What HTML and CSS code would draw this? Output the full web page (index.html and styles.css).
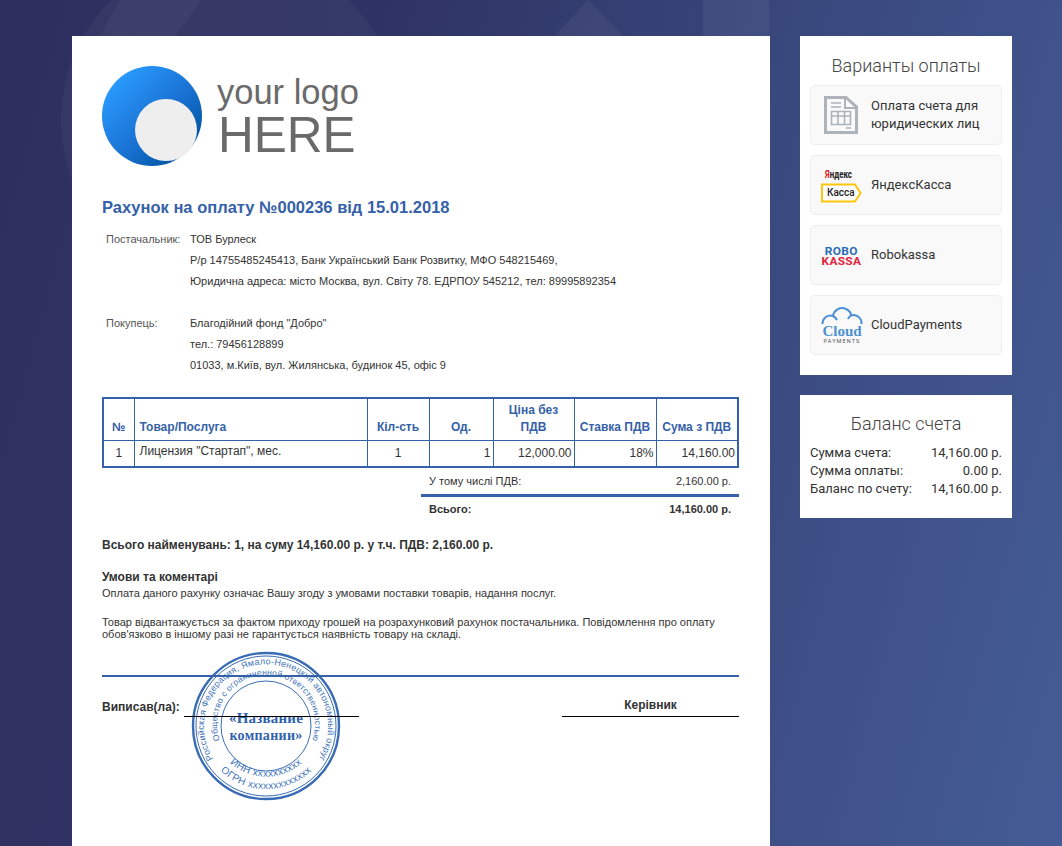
FILE: index.html
```html
<!DOCTYPE html>
<html lang="uk">
<head>
<meta charset="utf-8">
<title>Рахунок на оплату</title>
<link rel="stylesheet" href="styles.css">
</head>
<body>
<svg class="bg-shapes" width="1062" height="846" viewBox="0 0 1062 846" aria-hidden="true">
  <circle cx="230" cy="120" r="169" fill="#fff" fill-opacity="0.035"/>
  <polygon points="120,0 202,0 175,36 100,36" fill="#fff" fill-opacity="0.04"/>
  <polygon points="588,0 623,36 623,60 555,60 555,36" fill="#fff" fill-opacity="0.05"/>
  <rect x="703" y="0" width="66" height="40" fill="#fff" fill-opacity="0.05"/>
</svg>
<main class="page">
  <section class="invoice">
    <div class="logo">
      <svg class="logo-mark" width="100" height="100" viewBox="0 0 100 100" aria-hidden="true">
        <defs>
          <linearGradient id="lg" x1="0.15" y1="0.1" x2="0.9" y2="0.85">
            <stop offset="0" stop-color="#2a9bff"/>
            <stop offset="0.55" stop-color="#1a73d4"/>
            <stop offset="1" stop-color="#02539f"/>
          </linearGradient>
        </defs>
        <circle cx="50" cy="50" r="50" fill="url(#lg)"/>
        <circle cx="64" cy="64" r="31" fill="#eeeeee"/>
      </svg>
      <div class="logo-text">
        <div class="logo-your">your logo</div>
        <div class="logo-here">HERE</div>
      </div>
    </div>

    <h1 class="title">Рахунок на оплату №000236 від 15.01.2018</h1>

    <div class="party">
      <div class="party-label">Постачальник:</div>
      <div class="party-lines">
        <div>ТОВ Бурлеск</div>
        <div>Р/р 14755485245413, Банк Український Банк Розвитку, МФО 548215469,</div>
        <div>Юридична адреса: місто Москва, вул. Світу 78. ЕДРПОУ 545212, тел: 89995892354</div>
      </div>
    </div>
    <div class="party party-second">
      <div class="party-label">Покупець:</div>
      <div class="party-lines">
        <div>Благодійний фонд "Добро"</div>
        <div>тел.: 79456128899</div>
        <div>01033, м.Київ, вул. Жилянська, будинок 45, офіс 9</div>
      </div>
    </div>

    <table class="items">
      <colgroup>
        <col class="c1"><col class="c2"><col class="c3"><col class="c4"><col class="c5"><col class="c6"><col class="c7">
      </colgroup>
      <thead>
        <tr>
          <th>№</th>
          <th class="left">Товар/Послуга</th>
          <th>Кіл-сть</th>
          <th>Од.</th>
          <th>Ціна без<br>ПДВ</th>
          <th>Ставка ПДВ</th>
          <th>Сума з ПДВ</th>
        </tr>
      </thead>
      <tbody>
        <tr>
          <td class="center">1</td>
          <td class="name">Лицензия "Стартап", мес.</td>
          <td class="center">1</td>
          <td class="right">1</td>
          <td class="right">12,000.00</td>
          <td class="right">18%</td>
          <td class="right">14,160.00</td>
        </tr>
      </tbody>
    </table>

    <div class="totals">
      <div class="totals-row"><span>У тому числі ПДВ:</span><span>2,160.00 р.</span></div>
      <div class="totals-row totals-bold"><span>Всього:</span><span>14,160.00 р.</span></div>
    </div>

    <p class="grand">Всього найменувань: 1, на суму 14,160.00 р. у т.ч. ПДВ: 2,160.00 р.</p>

    <h2 class="terms-title">Умови та коментарі</h2>
    <p class="terms">Оплата даного рахунку означає Вашу згоду з умовами поставки товарів, надання послуг.</p>
    <p class="terms terms-second">Товар відвантажується за фактом приходу грошей на розрахунковий рахунок постачальника. Повідомлення про оплату обов'язково в іншому разі не гарантується наявність товару на складі.</p>

    <svg class="stamp" width="152" height="152" viewBox="0 0 152 152">
      <defs>
        <path id="ringA" d="M 24 110 A 62 62 0 1 1 128 110"/>
        <path id="ringB" d="M 30 91 A 49 49 0 1 1 122 91"/>
        <path id="ringC" d="M 20 108 A 66 66 0 0 0 132 108"/>
        <path id="ringD" d="M 30 101 A 54 54 0 0 0 122 101"/>
      </defs>
      <circle class="ring-thick" cx="76" cy="76" r="73"/>
      <circle class="ring-thin" cx="76" cy="76" r="70"/>
      <circle class="ring-thin" cx="76" cy="76" r="45"/>
      <text class="stamp-ring" text-anchor="middle"><textPath href="#ringA" startOffset="50%">Российская Федерация, Ямало-Ненецкий автономный округ</textPath></text>
      <text class="stamp-ring stamp-ring-in" text-anchor="middle"><textPath href="#ringB" startOffset="50%">Общество с ограниченной ответственностью</textPath></text>
      <text class="stamp-ring stamp-ring-low" text-anchor="middle"><textPath href="#ringC" startOffset="50%">ОГРН xxxxxxxxxxxxx</textPath></text>
      <text class="stamp-ring stamp-ring-low" text-anchor="middle"><textPath href="#ringD" startOffset="50%">ИНН xxxxxxxxxx</textPath></text>
      <text class="stamp-name" x="76" y="73" text-anchor="middle">«Название</text>
      <text class="stamp-name stamp-name-2" x="76" y="90" text-anchor="middle">компании»</text>
    </svg>

    <div class="sign">
      <div class="sign-left">
        <span class="sign-label">Виписав(ла):</span>
        <span class="sign-line"></span>
      </div>
      <div class="sign-right">Керівник</div>
    </div>
  </section>

  <aside class="side">
    <section class="card">
      <h3 class="card-title">Варианты оплаты</h3>
      <div class="pay-list">
        <div class="pay">
          <div class="pay-icon">
            <svg width="34" height="38" viewBox="0 0 34 38" aria-hidden="true">
              <path d="M1.5 1.5H22L32.5 11V36.5H1.5Z" fill="none" stroke="#adb3ba" stroke-width="3"/>
              <path d="M21 2V12H32" fill="none" stroke="#adb3ba" stroke-width="2"/>
              <path d="M7 7H17M7 11H17M22 32H27" stroke="#adb3ba" stroke-width="1.6"/>
              <path d="M7.5 15.5H26.5V28.5H7.5ZM7.5 20H26.5M14 15.5V28.5M20.5 15.5V28.5" fill="none" stroke="#adb3ba" stroke-width="1.6"/>
            </svg>
          </div>
          <div class="pay-name">Оплата счета для<br>юридических лиц</div>
        </div>
        <div class="pay">
          <div class="pay-icon yandex">
            <div class="ya-top"><span class="ya-red">Я</span>ндекс</div>
            <div class="ya-box">
              <svg class="ya-shape" width="41" height="20" viewBox="0 0 41 20" aria-hidden="true">
                <path d="M1 1.5H34L39.5 10L34 18.5H1Z" fill="#fff" stroke="#fdc60a" stroke-width="2"/>
              </svg>
              <span class="ya-label">Касса</span>
            </div>
          </div>
          <div class="pay-name">ЯндексКасса</div>
        </div>
        <div class="pay">
          <div class="pay-icon robo">
            <div class="robo-a">ROBO</div>
            <div class="robo-b">KASSA</div>
          </div>
          <div class="pay-name">Robokassa</div>
        </div>
        <div class="pay">
          <div class="pay-icon cloud">
            <svg class="cloud-shape" width="42" height="20" viewBox="0 0 42 20" aria-hidden="true">
              <path d="M1.500 18C1.500 12 7 8 12 10C13 4 19 1 24 2.500C28 4 30 7 30 9.500C35 7.500 41 12 40.500 18M12 10C14 11 15 12 16 14M30 9.500C28.500 10.500 27.500 11.500 27 13" fill="none" stroke="#4a90d2" stroke-width="2"/>
            </svg>
            <div class="cloud-word">Cloud</div>
            <div class="cloud-sub">PAYMENTS</div>
          </div>
          <div class="pay-name">CloudPayments</div>
        </div>
      </div>
    </section>
    <section class="card card-balance">
      <h3 class="card-title">Баланс счета</h3>
      <div class="bal-row"><span>Сумма счета:</span><span>14,160.00 р.</span></div>
      <div class="bal-row"><span>Сумма оплаты:</span><span>0.00 р.</span></div>
      <div class="bal-row"><span>Баланс по счету:</span><span>14,160.00 р.</span></div>
    </section>
  </aside>
</main>
</body>
</html>
```

FILE: styles.css
```css
* { box-sizing: border-box; }
html, body { margin: 0; padding: 0; height: 846px; overflow: hidden; }
body {
  background: linear-gradient(105deg, #2e2f5e 0%, #2f3363 30%, #3a4a80 66%, #3f5189 80%, #445c95 100%);
  font-family: "Liberation Sans", Arial, sans-serif;
  color: #333;
  position: relative;
}
.bg-shapes { position: absolute; left: 0; top: 0; }
.page {
  position: relative;
  display: flex;
  gap: 30px;
  align-items: flex-start;
  padding: 36px 0 0 72px;
}

/* invoice */
.invoice {
  position: relative;
  width: 698px;
  height: 810px;
  background: #fff;
  padding: 30px 31px 0 30px;
  overflow: hidden;
}
.logo { display: flex; align-items: flex-start; gap: 15px; height: 100px; }
.logo-mark { display: block; }
.logo-text { color: #6a6a6a; padding-top: 6px; }
.logo-your { font-size: 34.500px; line-height: 40px; }
.logo-here { font-size: 49.500px; line-height: 46px; margin-left: 1px; }

.title {
  margin: 32px 0 0;
  font-size: 16.500px;
  line-height: 18px;
  font-weight: bold;
  color: #3561a8;
}
.party {
  display: flex;
  margin-top: 13px;
  font-size: 11px;
  line-height: 21px;
}
.party-second { margin-top: 21px; }
.party-label { width: 88px; padding-left: 4px; color: #555; }
.party-lines { color: #333; }

.items {
  margin-top: 21px;
  width: 635px;
  table-layout: fixed;
  border-collapse: collapse;
  border: 2px solid #3561a8;
  font-size: 12px;
}
.c1 { width: 31px; } .c2 { width: 233px; } .c3 { width: 62px; } .c4 { width: 64px; }
.c5 { width: 81px; } .c6 { width: 82px; } .c7 { width: 82px; }
.items th, .items td { border: 1px solid #3561a8; }
.items th {
  height: 42px;
  padding: 0 2px 4px;
  color: #3561a8;
  font-weight: bold;
  font-size: 12px;
  line-height: 17px;
  text-align: center;
  vertical-align: bottom;
}
.items th.left { text-align: left; padding-left: 5px; }
.items td { height: 27px; padding: 0 2px; color: #333; vertical-align: middle; }
.items td.name { padding: 0 0 4px 5px; }
.center { text-align: center; }
.right { text-align: right; }

.totals { margin-left: 319px; width: 318px; font-size: 11px; }
.totals-row { display: flex; justify-content: space-between; padding: 0 8px; height: 24px; align-items: center; }
.totals-row:first-child { border-bottom: 3px solid #3561a8; height: 29px; padding-top: 0; }
.totals-bold { font-weight: bold; }

.grand { margin: 16px 0 0; font-size: 12px; line-height: 16px; font-weight: bold; color: #333; }
.terms-title { margin: 16px 0 0; font-size: 12px; line-height: 16px; font-weight: bold; color: #333; }
.terms { margin: 2px 0 0; font-size: 11px; line-height: 12px; color: #333; width: 636px; }
.terms-second { margin-top: 17px; }

.stamp { position: absolute; left: 118px; top: 614px; }
.stamp circle { fill: none; stroke: #3a6cb5; }
.ring-thick { stroke-width: 2.400; }
.ring-thin { stroke-width: 1; }
.stamp-ring { font-family: "Liberation Sans", Arial, sans-serif; font-size: 9px; fill: #4475bb; letter-spacing: 0.200px; }
.stamp-ring-in { font-size: 8.500px; letter-spacing: 0.200px; }
.stamp-ring-low { font-size: 10px; letter-spacing: 0.300px; }
.stamp-name { font-family: "Liberation Serif", "Times New Roman", serif; font-size: 15px; font-weight: bold; fill: #2f62ad; letter-spacing: 0.200px; }
.stamp-name-2 { font-size: 14px; letter-spacing: 0.300px; }

.sign {
  position: relative;
  display: flex;
  justify-content: space-between;
  margin-top: 35px;
  width: 637px;
  height: 42px;
  border-top: 2px solid #3561a8;
}
.sign-left { display: flex; align-items: flex-end; }
.sign-label { font-size: 12px; font-weight: bold; line-height: 16px; margin-bottom: 2px; color: #333; }
.sign-line { width: 175px; border-bottom: 1px solid #000; margin-left: 4px; }
.sign-right {
  width: 177px;
  align-self: flex-end;
  text-align: center;
  border-bottom: 1px solid #000;
  padding-bottom: 2px;
  font-size: 12px;
  font-weight: bold;
  line-height: 18px;
  color: #333;
}

/* side */
.side { width: 212px; display: flex; flex-direction: column; gap: 20px; }
.card { background: #fff; padding: 20px 10px; font-family: Roboto, sans-serif; color: #333; }
.card-title {
  margin: 0 0 9px;
  font-size: 18px;
  line-height: 20px;
  font-weight: 300;
  text-align: center;
  color: #444;
}
.pay-list { display: flex; flex-direction: column; gap: 10px; }
.pay {
  display: flex;
  align-items: center;
  height: 60px;
  border: 1px solid #eeeeee;
  border-radius: 5px;
  background: #f9f9f9;
  font-size: 13px;
  line-height: 18px;
}
.pay-icon { width: 60px; flex: none; display: flex; flex-direction: column; align-items: center; justify-content: center; }
.pay-name { color: #333; }

.yandex { align-items: flex-start; padding-left: 10px; }
.ya-top { font-size: 11px; line-height: 13px; font-weight: bold; color: #222; transform: scaleX(0.72); transform-origin: left center; margin-left: 4px; }
.ya-red { color: #e2231a; }
.ya-box { position: relative; width: 41px; height: 20px; margin-top: 2px; }
.ya-shape { display: block; }
.ya-label { position: absolute; left: 6px; top: 3px; font-size: 10px; line-height: 14px; font-weight: 500; color: #222; }

.robo { font-weight: bold; line-height: 10px; font-size: 11px; letter-spacing: 0.300px; padding-top: 3px; }
.robo-a { color: #2b6cb5; transform: scaleX(1.08); }
.robo-b { color: #e0243f; letter-spacing: 0.300px; transform: scaleX(1.08); }

.cloud { position: relative; color: #4a90d2; padding-left: 2px; }
.cloud-shape { display: block; margin-bottom: -2px; }
.cloud-word { font-family: "Liberation Serif", serif; font-weight: bold; font-size: 15px; line-height: 14px; color: #4a90d2; }
.cloud-sub { font-size: 5.500px; line-height: 7px; letter-spacing: 1.100px; color: #555; }

.card-balance { padding: 19px 10px 20px; }
.card-balance .card-title { margin-bottom: 10px; }
.bal-row { display: flex; justify-content: space-between; font-size: 13px; line-height: 18px; color: #333; }
```
